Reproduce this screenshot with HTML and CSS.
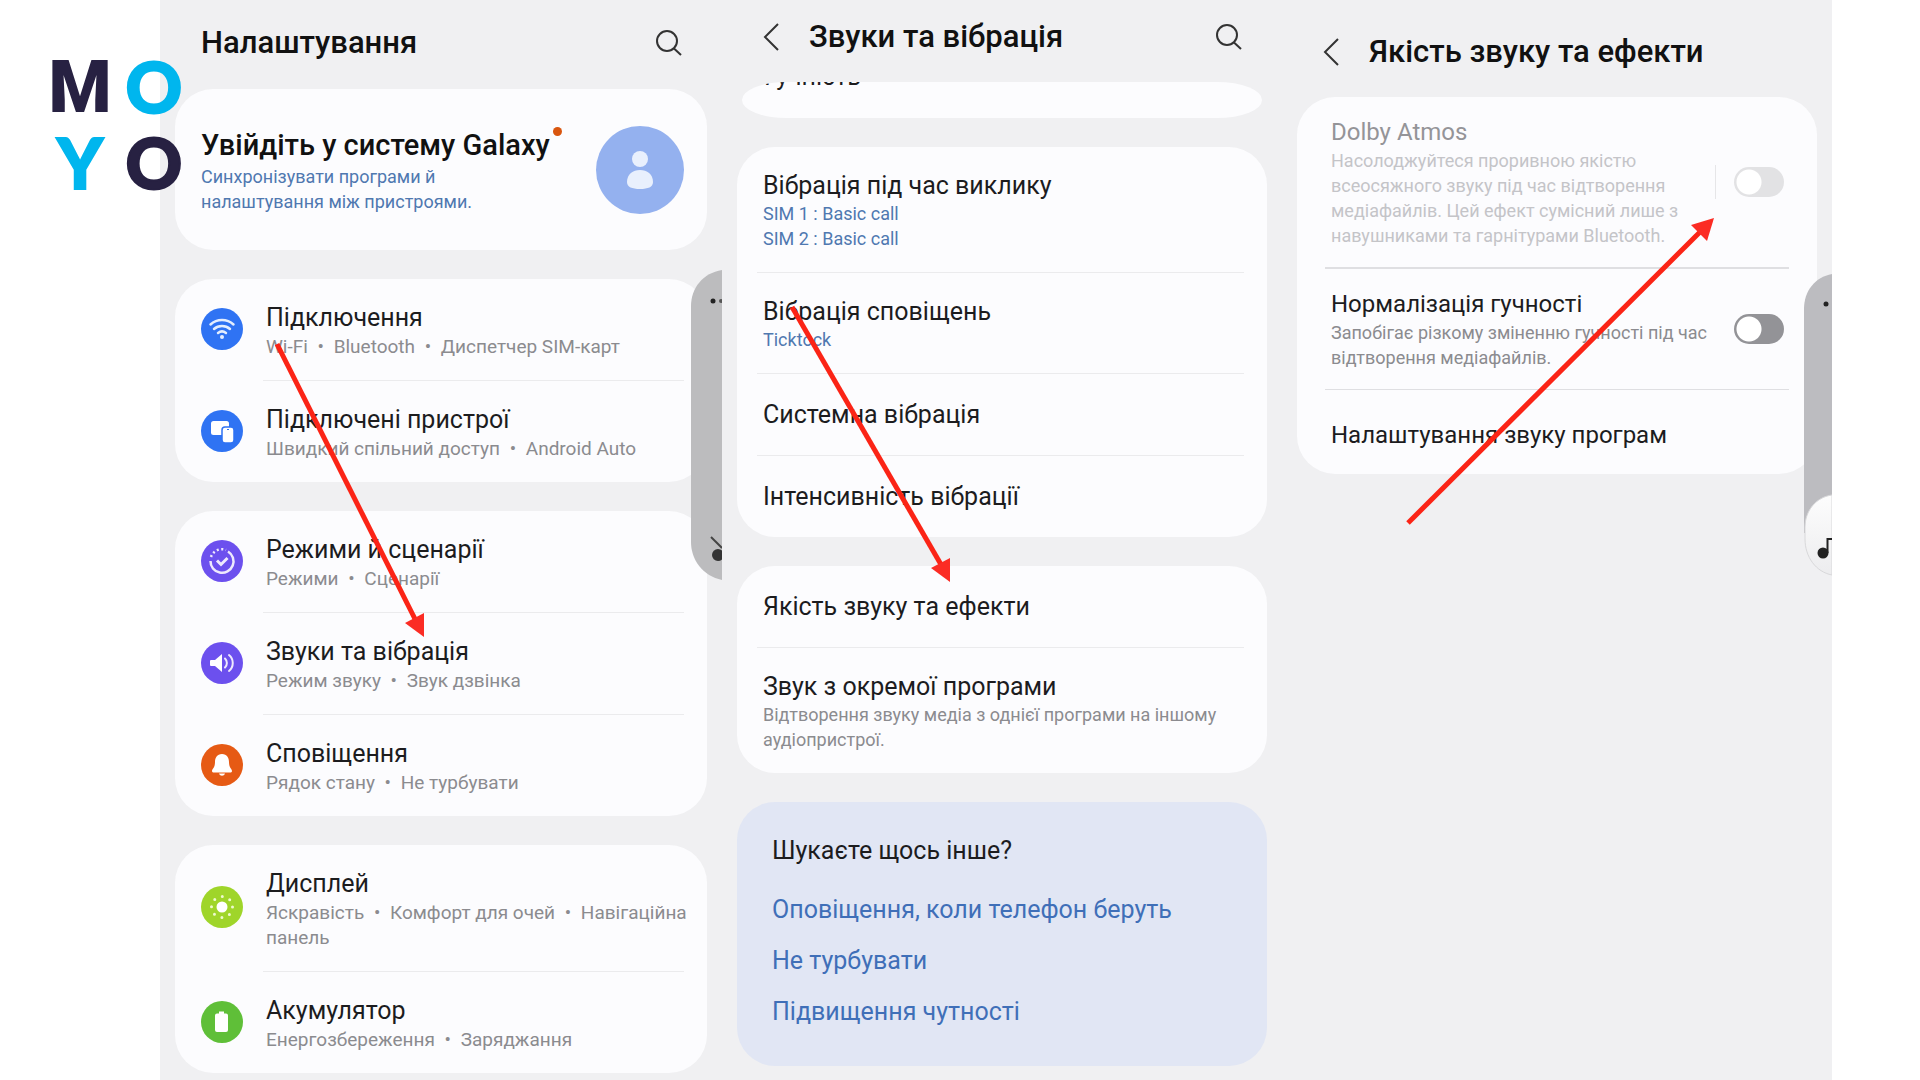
FILE: index.html
```html
<!DOCTYPE html>
<html lang="uk">
    <head>
        <meta charset="UTF-8" />
        <meta name="viewport" content="width=device-width, initial-scale=1.0" />
        <title>Звуки та вібрація</title>
        <link rel="stylesheet" href="styles.css">
    </head>
    <body>
        <div class="logo">
            <span class="dark letter-m">M</span>
            <span class="cyan">O</span>
            <span class="cyan">Y</span>
            <span class="dark">O</span>
        </div>

        <main class="screens">
            <section class="screen">
                <header class="bar">
                    <h1>Налаштування</h1>
                    <button class="icon-btn" aria-label="Пошук">
                        <svg width="28" height="28" viewBox="0 0 28 28"><circle cx="12" cy="12" r="10" /><path d="M19 19.500l7 6.500" /></svg>
                    </button>
                </header>

                <div class="card">
                    <a class="account" href="#">
                        <span class="text">
                            <span class="account-title">Увійдіть у систему Galaxy<i class="badge"></i></span>
                            <span class="sub blue">Синхронізувати програми й<br>налаштування між пристроями.</span>
                        </span>
                        <svg class="avatar" viewBox="0 0 88 88"><circle cx="44" cy="44" r="44" fill="#94b1ef" /><circle cx="44" cy="33" r="8" fill="#e9f0fd" /><path d="M31 56c0-8 6-12 13-12s13 4 13 12c0 5-5 7-13 7s-13-2-13-7z" fill="#e9f0fd" /></svg>
                    </a>
                </div>

                <div class="card with-icons">
                    <a class="row" href="#">
                        <svg class="icon" viewBox="0 0 42 42"><circle cx="21" cy="21" r="21" fill="#2f73f3" /><g fill="none" stroke="#e4eefe" stroke-width="2.500" stroke-linecap="round"><path d="M9.500 16.500c6.500-6 16.500-6 23 0M13 21c4.500-4 11.500-4 16 0M17 25c2.500-2 5.500-2 8 0" /></g><circle cx="21" cy="29" r="2" fill="#e4eefe" /></svg>
                        <span class="text">
                            <span class="title">Підключення</span>
                            <span class="sub">Wi-Fi&ensp;•&ensp;Bluetooth&ensp;•&ensp;Диспетчер SIM-карт</span>
                        </span>
                    </a>
                    <hr>
                    <a class="row" href="#">
                        <svg class="icon" viewBox="0 0 42 42"><circle cx="21" cy="21" r="21" fill="#2f73f3" /><rect x="10" y="11" width="18" height="14" rx="2.500" fill="#fff" /><rect x="21" y="17" width="12" height="16" rx="3" fill="#fff" stroke="#2f73f3" stroke-width="1.500" /><path d="M26 19.500h2" stroke="#2f73f3" /></svg>
                        <span class="text">
                            <span class="title">Підключені пристрої</span>
                            <span class="sub">Швидкий спільний доступ&ensp;•&ensp;Android Auto</span>
                        </span>
                    </a>
                </div>

                <div class="card with-icons">
                    <a class="row" href="#">
                        <svg class="icon" viewBox="0 0 42 42"><circle cx="21" cy="21" r="21" fill="#6c50ee" /><g fill="none" stroke="#eee9fd" stroke-width="2.500"><path d="M27 11.500A11.500 11.500 0 1 1 9.500 21" /><path d="M10 17a11.500 11.500 0 0 1 15-7" stroke-dasharray="2 2.500" /><path d="M16 20.500l4 4 6.500-6.500" stroke-width="3" /></g></svg>
                        <span class="text">
                            <span class="title">Режими й сценарії</span>
                            <span class="sub">Режими&ensp;•&ensp;Сценарії</span>
                        </span>
                    </a>
                    <hr>
                    <a class="row" href="#">
                        <svg class="icon" viewBox="0 0 42 42"><circle cx="21" cy="21" r="21" fill="#6c50ee" /><path d="M10 18h4l7-6v18l-7-6h-4q-1 0-1-1v-4q0-1 1-1z" fill="#fff" /><g fill="none" stroke="#eee9fd" stroke-width="2" stroke-linecap="round"><path d="M24 16.500c2.500 2.500 2.500 6.500 0 9M28 13c5 4 5 12 0 16" /></g></svg>
                        <span class="text">
                            <span class="title">Звуки та вібрація</span>
                            <span class="sub">Режим звуку&ensp;•&ensp;Звук дзвінка</span>
                        </span>
                    </a>
                    <hr>
                    <a class="row" href="#">
                        <svg class="icon" viewBox="0 0 42 42"><circle cx="21" cy="21" r="21" fill="#e65a14" /><path d="M21 10c-5 0-7 4-7 8 0 6-3 7-3 9 0 1 1 1.500 2 1.500h16c1 0 2-.5 2-1.500 0-2-3-3-3-9 0-4-2-8-7-8z" fill="#fff" /><path d="M18 29.500c1 3 5 3 6 0z" fill="#fff" /></svg>
                        <span class="text">
                            <span class="title">Сповіщення</span>
                            <span class="sub">Рядок стану&ensp;•&ensp;Не турбувати</span>
                        </span>
                    </a>
                </div>

                <div class="card with-icons">
                    <a class="row" href="#">
                        <svg class="icon" viewBox="0 0 42 42"><circle cx="21" cy="21" r="21" fill="#9fd52a" /><circle cx="21" cy="21" r="5.500" fill="#fff" /><circle cx="21" cy="21" r="10.500" fill="none" stroke="#eef9cf" stroke-width="3" stroke-linecap="round" stroke-dasharray="0 8.247" /></svg>
                        <span class="text">
                            <span class="title">Дисплей</span>
                            <span class="sub">Яскравість&ensp;•&ensp;Комфорт для очей&ensp;•&ensp;Навігаційна панель</span>
                        </span>
                    </a>
                    <hr>
                    <a class="row" href="#">
                        <svg class="icon" viewBox="0 0 42 42"><circle cx="21" cy="21" r="21" fill="#5fbf38" /><path d="M18 10.500h5v2h2q2 0 2 2v14.500q0 2-2 2h-9q-2 0-2-2v-14.500q0-2 2-2h2z" fill="#fff" /></svg>
                        <span class="text">
                            <span class="title">Акумулятор</span>
                            <span class="sub">Енергозбереження&ensp;•&ensp;Заряджання</span>
                        </span>
                    </a>
                </div>

                <!-- volume panel sliding in from the edge -->
                <svg class="volume" width="31" height="310" viewBox="0 0 31 310">
                    <path d="M31 0C12 3 0 18 0 36v236c0 18 12 34 31 38z" fill="#bcbcbe" />
                    <circle cx="22" cy="31" r="2.500" fill="#222" /><circle cx="30" cy="31" r="2" fill="#555" />
                    <circle cx="27" cy="285" r="6" fill="#333" /><path d="M20 267l11 11" stroke="#444" stroke-width="2" />
                </svg>
                <svg class="arrow arrow-1" width="150" height="296" viewBox="0 0 150 296">
                    <path d="M2 2L142 281" /><polygon points="130,281 149,271 149,295" />
                </svg>
            </section>

            <section class="screen">
                <header class="bar bar-short">
                    <button class="icon-btn back" aria-label="Назад">
                        <svg width="16" height="28" viewBox="0 0 16 28"><path d="M15 1L2 14l13 13" /></svg>
                    </button>
                    <h1>Звуки та вібрація</h1>
                    <button class="icon-btn" aria-label="Пошук">
                        <svg width="28" height="28" viewBox="0 0 28 28"><circle cx="12" cy="12" r="10" /><path d="M19 19.500l7 6.500" /></svg>
                    </button>
                </header>

                <div class="card scrolled">
                    <span class="title">Гучність</span>
                </div>

                <div class="card">
                    <a class="row" href="#">
                        <span class="text">
                            <span class="title">Вібрація під час виклику</span>
                            <span class="sub blue">SIM 1 : Basic call<br>SIM 2 : Basic call</span>
                        </span>
                    </a>
                    <hr>
                    <a class="row" href="#">
                        <span class="text">
                            <span class="title">Вібрація сповіщень</span>
                            <span class="sub blue">Ticktock</span>
                        </span>
                    </a>
                    <hr>
                    <a class="row single" href="#"><span class="title">Системна вібрація</span></a>
                    <hr>
                    <a class="row single" href="#"><span class="title">Інтенсивність вібрації</span></a>
                </div>

                <div class="card">
                    <a class="row single" href="#"><span class="title">Якість звуку та ефекти</span></a>
                    <hr>
                    <a class="row" href="#">
                        <span class="text">
                            <span class="title">Звук з окремої програми</span>
                            <span class="sub">Відтворення звуку медіа з однієї програми на іншому аудіопристрої.</span>
                        </span>
                    </a>
                </div>

                <div class="card related">
                    <h2>Шукаєте щось інше?</h2>
                    <a href="#">Оповіщення, коли телефон беруть</a>
                    <a href="#">Не турбувати</a>
                    <a href="#">Підвищення чутності</a>
                </div>

                <svg class="arrow arrow-2" width="162" height="278" viewBox="0 0 162 278">
                    <path d="M2 2L153 263" /><polygon points="141,263 160,253 160,277" />
                </svg>
            </section>

            <section class="screen">
                <header class="bar bar-tall">
                    <button class="icon-btn back" aria-label="Назад">
                        <svg width="16" height="28" viewBox="0 0 16 28"><path d="M15 1L2 14l13 13" /></svg>
                    </button>
                    <h1>Якість звуку та ефекти</h1>
                </header>

                <div class="card effects">
                    <label class="row disabled" for="dolby">
                        <span class="text">
                            <span class="title">Dolby Atmos</span>
                            <span class="sub">Насолоджуйтеся проривною якістю всеосяжного звуку під час відтворення медіафайлів. Цей ефект сумісний лише з навушниками та гарнітурами Bluetooth.</span>
                        </span>
                        <span class="separator"></span>
                        <input class="switch" id="dolby" type="checkbox" disabled>
                    </label>
                    <hr class="strong">
                    <label class="row" for="normalize">
                        <span class="text">
                            <span class="title">Нормалізація гучності</span>
                            <span class="sub">Запобігає різкому зміненню гучності під час відтворення медіафайлів.</span>
                        </span>
                        <input class="switch" id="normalize" type="checkbox">
                    </label>
                    <hr>
                    <a class="row last" href="#"><span class="title">Налаштування звуку програм</span></a>
                </div>

                <svg class="volume volume-light" width="28" height="304" viewBox="0 0 28 304">
                    <defs>
                        <linearGradient id="knob" x1="0" y1="0" x2="0" y2="1">
                            <stop offset="0" stop-color="#fdfdfd" /><stop offset="1" stop-color="#ececee" />
                        </linearGradient>
                    </defs>
                    <path d="M28 1C11 4 0 18 0 36v224h28z" fill="#bcbcc0" />
                    <path d="M28 222C12 224 1 238 1 254v12c0 18 11 33 27 36z" fill="url(#knob)" stroke="#d8d8da" stroke-width="1" />
                    <circle cx="22" cy="31" r="2.500" fill="#222" />
                    <circle cx="19" cy="280" r="5.500" fill="#222" /><path d="M23.500 280v-14h4.500" fill="none" stroke="#222" stroke-width="2" />
                </svg>
                <svg class="arrow arrow-3" width="310" height="308" viewBox="0 0 310 308">
                    <path d="M2 306L294 15" /><polygon points="285,8 308,1 301,24" />
                </svg>
            </section>
        </main>
    </body>
</html>
```
FILE: styles.css
```css
* {
    box-sizing: border-box;
}

body {
    margin: 0;
    background-color: #fff;
    color: #1c1c1e;
    font-family: Roboto, "Noto Sans", sans-serif;
    position: relative;
}

a {
    color: inherit;
    text-decoration: none;
}

/* logo sits over the first screen */
.logo {
    position: absolute;
    z-index: 2;
    left: 48px;
    top: 52px;
    display: grid;
    grid-template-columns: 64px 84px;
    grid-auto-rows: 76px;
    justify-items: center;
    font-family: Lato, sans-serif;
    font-size: 70px;
    line-height: 68px;
    font-weight: 900;
    -webkit-text-stroke: 2px;
}

.letter-m {
    font-family: Roboto, sans-serif;
    font-size: 72px;
    line-height: 72px;
    -webkit-text-stroke: 0;
}

.dark {
    color: #272142;
}

.cyan {
    color: #00b6ee;
}

.screens {
    display: grid;
    grid-template-columns: 562fr 560fr 550fr;
    min-height: 100vh;
    padding: 0 88px 0 160px;
}

.screen {
    position: relative;
    display: flex;
    flex-direction: column;
    gap: 29px;
    padding: 0 15px;
    background-color: #f0f0f2;
    overflow: hidden;
}

.bar {
    display: flex;
    align-items: center;
    height: 89px;
    margin-bottom: -29px;
    padding: 0 24px 3px 26px;
}

.bar-short {
    height: 82px;
    padding-bottom: 8px;
}

.bar-tall {
    height: 97px;
    padding-top: 9px;
}

h1 {
    flex: 1;
    margin: 0;
    font-size: 31px;
    line-height: 36px;
    font-weight: 500;
    color: #111;
    white-space: nowrap;
}

.icon-btn {
    display: flex;
    padding: 0;
    border: 0;
    background: none;
}

.icon-btn svg {
    fill: none;
    stroke: #333;
    stroke-width: 2;
}

.back {
    margin-right: 30px;
}

.card {
    border-radius: 38px;
    background-color: #fcfcfe;
}

.account {
    display: flex;
    align-items: center;
    justify-content: space-between;
    height: 161px;
    padding: 0 23px 0 26px;
}

.account-title {
    position: relative;
    align-self: flex-start;
    font-size: 29px;
    line-height: 38px;
    font-weight: 500;
    color: #111;
}

.badge {
    position: absolute;
    right: -12px;
    top: 1px;
    width: 9px;
    height: 9px;
    border-radius: 50%;
    background-color: #d9560f;
}

.avatar {
    width: 88px;
    height: 88px;
}

.row {
    display: flex;
    align-items: center;
    gap: 23px;
    min-height: 81px;
    padding: 24px 26px 21px;
}

.single {
    padding: 20px 26px;
}

.icon {
    flex: none;
    width: 42px;
    height: 42px;
    margin-bottom: 4px;
}

.text {
    display: flex;
    flex-direction: column;
    flex: 1;
}

.title {
    font-size: 25px;
    line-height: 30px;
}

.sub {
    font-size: 18px;
    line-height: 25px;
    color: #8b8b8f;
}

.with-icons .row {
    padding: 23px 20px 21px 26px;
}

.with-icons .title {
    line-height: 32px;
}

.with-icons .sub {
    font-size: 19px;
}

.blue {
    color: #4f78b0;
}

hr {
    height: 1px;
    margin: 0 23px 0 20px;
    border: 0;
    background-color: #ebebed;
}

.with-icons hr {
    margin-left: 88px;
}

/* bottom of a card that has scrolled under the header */
.scrolled {
    height: 36px;
    margin: 0 5px;
    padding: 0 22px;
    border-radius: 45px / 18px;
    overflow: hidden;
}

.scrolled .title {
    display: block;
    margin-top: -20px;
}

.related {
    display: flex;
    flex-direction: column;
    align-items: flex-start;
    gap: 20px;
    padding: 33px 35px 39px;
    background-color: #e1e6f4;
    font-size: 25px;
    line-height: 31px;
}

.related h2 {
    margin: 0 0 8px;
    font-size: 25px;
    font-weight: 400;
}

.related a {
    color: #3f6fb8;
}

.effects .row {
    gap: 18px;
    padding: 19px 33px 19px 34px;
}

.effects .last {
    min-height: 84px;
    padding-top: 25px;
}

.effects .title {
    font-size: 24px;
    line-height: 32px;
}

.effects hr {
    margin: 0 28px;
    background-color: #dfdfe2;
}

.effects .strong {
    height: 2px;
}

.disabled .title {
    color: #949498;
}

.disabled .sub {
    color: #c4c4c8;
}

.separator {
    width: 1px;
    height: 34px;
    background-color: #e6e6e8;
}

.switch {
    appearance: none;
    flex: none;
    width: 50px;
    height: 30px;
    margin: 0;
    border-radius: 15px;
    background: radial-gradient(circle at 15px 15px, #fff 12px, #939397 13px);
}

.switch:disabled {
    background: radial-gradient(circle at 15px 15px, #fff 12px, #e2e2e4 13px);
}

.volume {
    position: absolute;
    right: 0;
    top: 270px;
}

.volume-light {
    top: 273px;
}

.arrow {
    position: absolute;
    fill: #fb2c24;
}

.arrow path {
    stroke: #fb2416;
    stroke-width: 5;
}

.arrow-1 {
    left: 115px;
    top: 342px;
}

.arrow-2 {
    left: 68px;
    top: 305px;
}

.arrow-3 {
    left: 124px;
    top: 217px;
}
```
